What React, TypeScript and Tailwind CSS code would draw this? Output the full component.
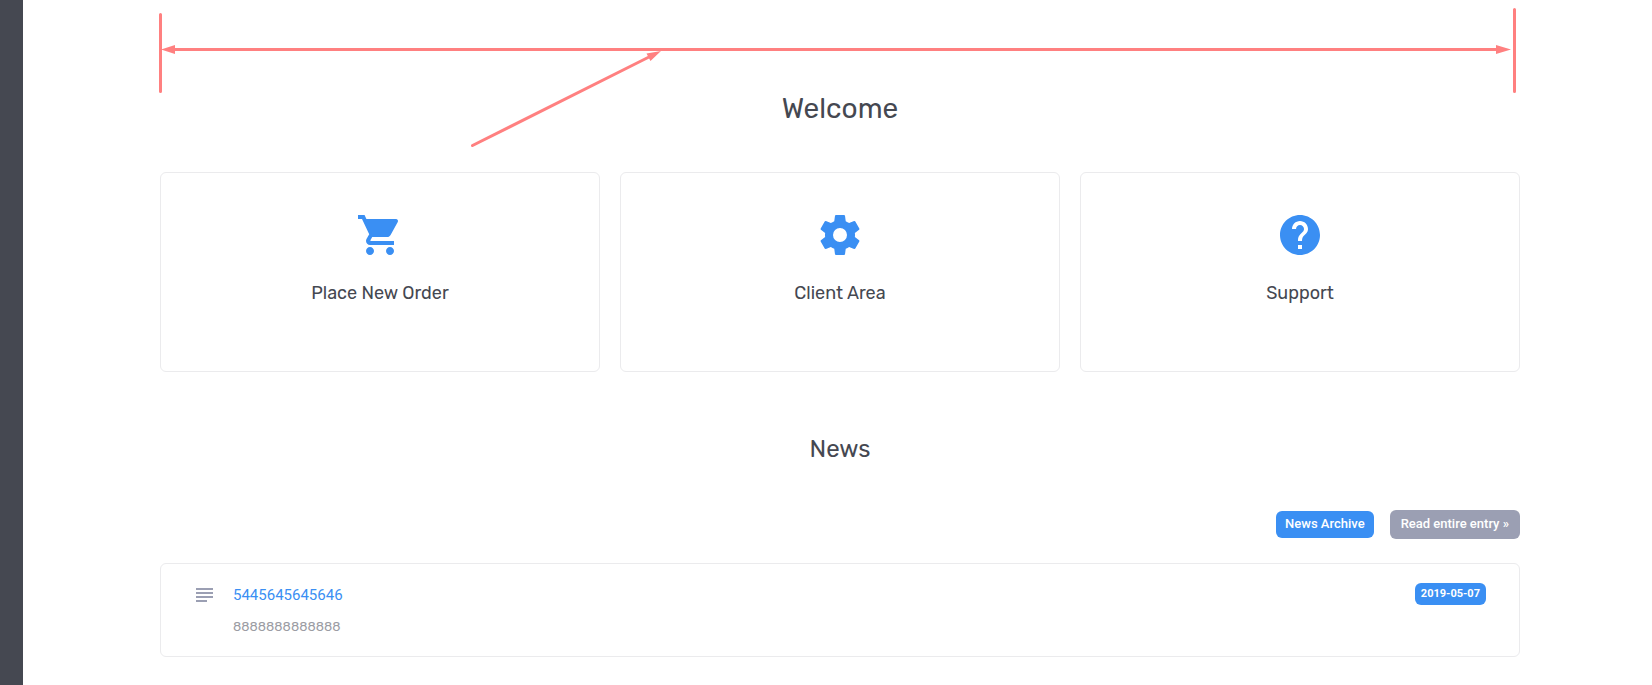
import React from "react";
import { MdShoppingCart, MdHelp } from "react-icons/md";

function GearIcon({ className }: { className?: string }) {
  return (
    <svg viewBox="0 0 24 24" className={className} fill="currentColor" aria-hidden="true">
      <path d="M12,15.5A3.5,3.5 0 0,1 8.5,12A3.5,3.5 0 0,1 12,8.5A3.5,3.5 0 0,1 15.5,12A3.5,3.5 0 0,1 12,15.5M19.43,12.97C19.47,12.65 19.5,12.33 19.5,12C19.5,11.67 19.47,11.34 19.43,11L21.54,9.37C21.73,9.22 21.78,8.95 21.66,8.73L19.66,5.27C19.54,5.05 19.27,4.96 19.05,5.05L16.56,6.05C16.04,5.66 15.5,5.32 14.87,5.07L14.5,2.42C14.46,2.18 14.25,2 14,2H10C9.75,2 9.54,2.18 9.5,2.42L9.13,5.07C8.5,5.32 7.96,5.66 7.44,6.05L4.95,5.05C4.73,4.96 4.46,5.05 4.34,5.27L2.34,8.73C2.21,8.95 2.27,9.22 2.46,9.37L4.57,11C4.53,11.34 4.5,11.67 4.5,12C4.5,12.33 4.53,12.65 4.57,12.97L2.46,14.63C2.27,14.78 2.21,15.05 2.34,15.27L4.34,18.73C4.46,18.95 4.73,19.03 4.95,18.95L7.44,17.94C7.96,18.34 8.5,18.68 9.13,18.93L9.5,21.58C9.54,21.82 9.75,22 10,22H14C14.25,22 14.46,21.82 14.5,21.58L14.87,18.93C15.5,18.67 16.04,18.34 16.56,17.94L19.05,18.95C19.27,19.03 19.54,18.95 19.66,18.73L21.66,15.27C21.78,15.05 21.73,14.78 21.54,14.63L19.43,12.97Z" />
    </svg>
  );
}

function LinesIcon({ className }: { className?: string }) {
  return (
    <svg viewBox="0 0 17 14" className={className} fill="currentColor" aria-hidden="true">
      <path d="M0 0h17v2H0zM0 4h17v2H0zM0 8h17v2H0zM0 12h11v2H0z" />
    </svg>
  );
}

function WidthMarker() {
  return (
    <svg
      viewBox="0 0 1364 150"
      className="pointer-events-none absolute top-0 -left-0.5 h-[150px] w-[1364px] text-[#ff8080]"
      aria-hidden="true"
    >
      <g stroke="currentColor" strokeWidth="3" fill="none" strokeLinecap="round">
        <path d="M2.5 14.500V91.500M1356.500 9.500V91.500M12 49.500H1342M314.500 145.500L492 56.500" />
      </g>
      <g fill="currentColor">
        <path d="M3 49.500L17 45V54zM1353 49.500L1338 45V54zM503 51L488.500 53.500L492.500 61z" />
      </g>
    </svg>
  );
}

const tiles = [
  { label: "Place New Order", Icon: MdShoppingCart },
  { label: "Client Area", Icon: GearIcon },
  { label: "Support", Icon: MdHelp },
];

export default function App() {
  return (
    <div className="flex min-h-screen bg-white font-[Rubik,Roboto,sans-serif] text-[#454851]">
      <aside className="w-[23px] shrink-0 bg-[#454851]" />
      <main className="min-w-0 flex-1 pr-[132px] pb-7 pl-[137px]">
        <div className="relative">
          <WidthMarker />
          <h1 className="pt-[91px] text-center text-[28px] leading-9">Welcome</h1>
          <section className="mt-[45px] grid grid-cols-3 gap-5">
            {tiles.map(({ label, Icon }) => (
              <a
                key={label}
                href="#"
                className="flex h-[200px] flex-col items-center rounded-md border border-[#ebebed] pt-[38px]"
              >
                <Icon className="size-12 text-[#3a8ff3]" />
                <span className="mt-5 text-lg leading-7">{label}</span>
              </a>
            ))}
          </section>
          <h2 className="mt-[61px] text-center text-2xl leading-8">News</h2>
          <div className="mt-[45px] flex items-center justify-end gap-4 font-[Roboto,sans-serif]">
            <a
              href="#"
              className="rounded-md bg-[#3a8ff3] px-[9px] pt-1 pb-[5px] text-[13px] leading-[18px] font-medium text-white"
            >
              News Archive
            </a>
            <a
              href="#"
              className="rounded-md bg-[#9b9fb3] px-[11px] pt-[5px] pb-1.5 text-[13px] leading-[18px] font-medium text-white"
            >
              Read entire entry »
            </a>
          </div>
          <article className="mt-6 flex h-[94px] items-start rounded-md border border-[#ebebed] px-[33px] pt-[19px]">
            <LinesIcon className="mt-[5px] ml-0.5 h-[14px] w-[17px] text-[#9b9fb3]" />
            <div className="ml-5 flex-1">
              <a
                href="#"
                className="block font-[Roboto,sans-serif] text-[15px] leading-6 text-[#3a8ff3]"
              >
                5445645645646
              </a>
              <p className="mt-2 text-[13px] leading-6 text-[#9b9ca3]">8888888888888</p>
            </div>
            <time className="rounded-md bg-[#3a8ff3] px-1.5 py-[3px] font-[Roboto,sans-serif] text-[11px] leading-4 font-bold text-white">
              2019-05-07
            </time>
          </article>
        </div>
      </main>
    </div>
  );
}
